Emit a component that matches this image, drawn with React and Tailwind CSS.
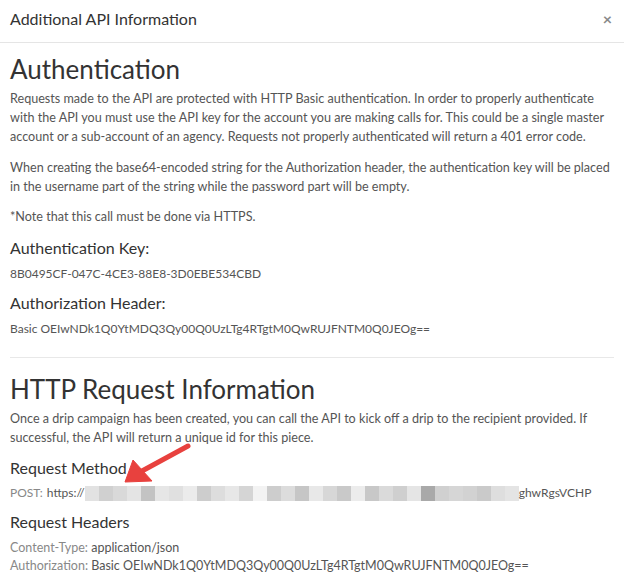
import React from "react";

const mosaic = [
  "#e2e2e2", "#d0d0d0", "#d9d9d9", "#e4e4e4", "#c3c3c3", "#e6e6e6", "#e0e0e0", "#ebebeb",
  "#cdcdcd", "#dddddd", "#e7e7e7", "#d5d5d5", "#f3f3f3", "#cdcdcd", "#dcdcdc", "#c6c6c6",
  "#e8e8e8", "#d7d7d7", "#c9c9c9", "#ececec", "#c8c8c8", "#dadada", "#cfcfcf", "#e5e5e5",
  "#a9a9a9", "#d0d0d0", "#d6d6d6", "#d2d2d2", "#cacaca", "#dedede", "#e4e4e4",
];

const font = { fontFamily: "Lato, 'Open Sans', sans-serif" };

export default function App() {
  return (
    <div
      className="w-[624px] h-[579px] bg-white text-[#333] overflow-hidden relative"
      style={font}
    >
      <div className="h-[43px] flex items-center justify-between pl-[10px] pr-[12px] pb-[4px] border-b border-[#e5e5e5]">
        <span className="text-[16px] text-[#333]">Additional API Information</span>
        <span className="text-[16px] font-bold text-[#888] leading-none">×</span>
      </div>

      <div className="px-[10px]">
        <h2 className="text-[26px] leading-[34px] mt-[9px] mb-[3px] text-[#333]">Authentication</h2>
        <p className="text-[12.6px] leading-[19px] text-[#555] whitespace-nowrap">
          Requests made to the API are protected with HTTP Basic authentication. In order to properly authenticate
          <br />
          with the API you must use the API key for the account you are making calls for. This could be a single master
          <br />
          account or a sub-account of an agency. Requests not properly authenticated will return a 401 error code.
        </p>
        <p className="text-[12.6px] leading-[19px] text-[#555] mt-[12px] whitespace-nowrap">
          When creating the base64-encoded string for the Authorization header, the authentication key will be placed
          <br />
          in the username part of the string while the password part will be empty.
        </p>
        <p className="text-[12.6px] leading-[19px] text-[#555] mt-[11px]">*Note that this call must be done via HTTPS.</p>

        <h4 className="text-[16px] leading-[22px] mt-[11px] text-[#333]">Authentication Key:</h4>
        <div className="text-[12px] leading-[18px] text-[#555] mt-[6px]">8B0495CF-047C-4CE3-88E8-3D0EBE534CBD</div>

        <h4 className="text-[16px] leading-[22px] mt-[9px] text-[#333]">Authorization Header:</h4>
        <div className="text-[12px] leading-[18px] text-[#555] mt-[6px]">
          Basic OEIwNDk1Q0YtMDQ3Qy00Q0UzLTg4RTgtM0QwRUJFNTM0Q0JEOg==
        </div>

        <hr className="border-0 border-t border-[#e8e8e8] mt-[19px]" />

        <h2 className="text-[26px] leading-[34px] mt-[14px] mb-[3px] text-[#333]">HTTP Request Information</h2>
        <p className="text-[12.6px] leading-[19px] text-[#555] whitespace-nowrap">
          Once a drip campaign has been created, you can call the API to kick off a drip to the recipient provided. If
          <br />
          successful, the API will return a unique id for this piece.
        </p>

        <h4 className="text-[16px] leading-[22px] mt-[10px] text-[#333]">Request Method</h4>
        <div className="text-[12px] leading-[18px] mt-[5px] flex items-center">
          <span className="text-[#888]">POST:</span>
          <span className="text-[#555] ml-[4px]">https://</span>
          <span className="inline-flex h-[15px]">
            {mosaic.map((c, i) => (
              <span key={i} className="w-[14px] h-full" style={{ backgroundColor: c }} />
            ))}
          </span>
          <span className="text-[#555]">ghwRgsVCHP</span>
        </div>

        <h4 className="text-[16px] leading-[22px] mt-[9px] text-[#333]">Request Headers</h4>
        <div className="text-[12.5px] leading-[18px] mt-[6px]">
          <span className="text-[#888]">Content-Type: </span>
          <span className="text-[#555]">application/json</span>
        </div>
        <div className="text-[12.5px] leading-[18px]">
          <span className="text-[#888]">Authorization: </span>
          <span className="text-[#555]">Basic OEIwNDk1Q0YtMDQ3Qy00Q0UzLTg4RTgtM0QwRUJFNTM0Q0JEOg==</span>
        </div>
      </div>

      <svg className="absolute left-[110px] top-[440px]" width="90" height="55" viewBox="0 0 90 55">
        <line x1="78" y1="6" x2="32" y2="31" stroke="#e8413e" strokeWidth="5" strokeLinecap="round" />
        <polygon points="15,42 23,20 42,41" fill="#e8413e" strokeLinejoin="round" stroke="#e8413e" strokeWidth="1" />
      </svg>
    </div>
  );
}
